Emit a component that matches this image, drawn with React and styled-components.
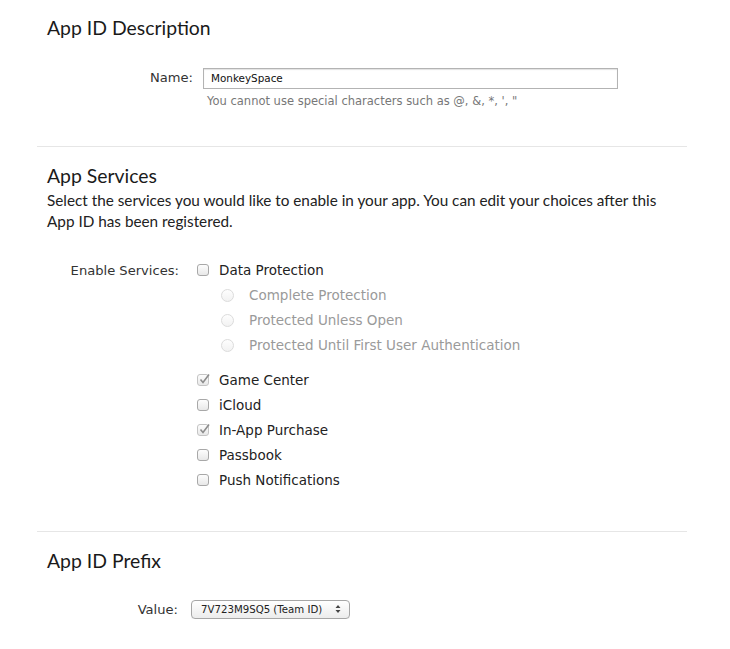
import React from "react";
import styled, { createGlobalStyle } from "styled-components";

const Global = createGlobalStyle`
  html, body { margin: 0; padding: 0; background: #fff; }
  body { font-family: "DejaVu Sans", "Lato", sans-serif; color: #222; }
`;

const Page = styled.div`
  width: 650px;
  margin-left: 37px;
  padding-top: 16px;
`;

const Section = styled.section`
  padding: 0 10px ${(p) => p.$bottom || 0}px;
`;

const Divider = styled.hr`
  border: 0;
  border-top: 1px solid #e6e6e6;
  margin: 0;
`;

const Heading = styled.h2`
  margin: 0;
  font-family: "Lato", sans-serif;
  font-size: 19.4px;
  font-weight: 400;
  line-height: 24px;
  color: #1a1a1a;
  padding-top: ${(p) => p.$top || 0}px;
`;

const Description = styled.p`
  margin: 2px 0 0;
  font-family: "Lato", sans-serif;
  font-size: 15.3px;
  line-height: 21px;
  width: 630px;
  color: #222;
`;

const FormRow = styled.div`
  display: grid;
  grid-template-columns: ${(p) => p.$label}px auto;
  column-gap: ${(p) => p.$gap}px;
  align-items: start;
  margin-top: ${(p) => p.$top}px;
`;

const Label = styled.label`
  text-align: right;
  font-size: 13.1px;
  line-height: ${(p) => p.$lh || 20}px;
  color: #333;
  white-space: nowrap;
`;

const TextInput = styled.input`
  box-sizing: border-box;
  width: 415px;
  height: 21px;
  border: 1px solid #b3b3b3;
  box-shadow: inset 0 1px 1px rgba(0, 0, 0, 0.12);
  padding: 0 7px;
  font-family: "DejaVu Sans", sans-serif;
  font-size: 10.4px;
  color: #111;
  outline: none;
`;

const Hint = styled.div`
  padding-left: 4px;
  margin-top: 4px;
  font-size: 11.5px;
  line-height: 16px;
  color: #777;
`;

const OptionList = styled.div`
  display: flex;
  flex-direction: column;
`;

const Option = styled.div`
  display: flex;
  align-items: center;
  height: 25px;
  padding-left: ${(p) => (p.$indent ? 24 : 0)}px;
  margin-top: ${(p) => p.$top || 0}px;
  font-size: 13.5px;
  color: ${(p) => (p.$muted ? "#9a9a9a" : "#222")};
  white-space: nowrap;
`;

const Box = styled.span`
  box-sizing: border-box;
  width: 12px;
  height: 12px;
  margin-right: 10px;
  border: 1px solid #a8a8a8;
  border-radius: 3px;
  background: linear-gradient(#fdfdfd, #e8e8e8);
  position: relative;
  flex: none;
  ${(p) => p.$checked && `border-color: #c4c4c4;`}
`;

const Tick = styled.svg`
  position: absolute;
  left: 0px;
  top: -3px;
`;

const Radio = styled.span`
  box-sizing: border-box;
  width: 13px;
  height: 13px;
  margin-right: 15px;
  border: 1px solid #dcdcdc;
  border-radius: 50%;
  background: linear-gradient(#fefefe, #f2f2f2);
  flex: none;
`;

const Select = styled.div`
  box-sizing: border-box;
  width: 159px;
  height: 19px;
  border: 1px solid #a6a6a6;
  border-radius: 4px;
  background: linear-gradient(#ffffff, #ececec);
  box-shadow: 0 1px 0 rgba(0, 0, 0, 0.05);
  display: flex;
  align-items: center;
  justify-content: space-between;
  padding: 0 8px 0 9px;
  font-size: 10.2px;
  color: #222;
`;

const Arrows = styled.svg`
  flex: none;
`;

function Checkbox({ checked }) {
  return (
    <Box $checked={checked}>
      {checked && (
        <Tick width="13" height="13" viewBox="0 0 13 13">
          <path d="M2.5 7.5 L5 10.5 L11 2.5" fill="none" stroke="#8c8c8c" strokeWidth="1.6" />
        </Tick>
      )}
    </Box>
  );
}

const services = [
  { name: "Game Center", checked: true },
  { name: "iCloud", checked: false },
  { name: "In-App Purchase", checked: true },
  { name: "Passbook", checked: false },
  { name: "Push Notifications", checked: false },
];

const protections = [
  "Complete Protection",
  "Protected Unless Open",
  "Protected Until First User Authentication",
];

export default function App() {
  return (
    <>
      <Global />
      <Page>
        <Section $bottom={37}>
          <Heading>App ID Description</Heading>
          <FormRow $label={146} $gap={10} $top={27}>
            <Label $lh={21}>Name:</Label>
            <div>
              <TextInput defaultValue="MonkeySpace" />
              <Hint>You cannot use special characters such as @, &amp;, *, ', "</Hint>
            </div>
          </FormRow>
        </Section>
        <Divider />
        <Section $bottom={38}>
          <Heading $top={17}>App Services</Heading>
          <Description>
            Select the services you would like to enable in your app. You can edit your choices after this App ID has been registered.
          </Description>
          <FormRow $label={132} $gap={18} $top={26}>
            <Label $lh={25}>Enable Services:</Label>
            <OptionList>
              <Option>
                <Checkbox />
                Data Protection
              </Option>
              {protections.map((p) => (
                <Option key={p} $indent $muted>
                  <Radio />
                  {p}
                </Option>
              ))}
              {services.map((s, i) => (
                <Option key={s.name} $top={i === 0 ? 10 : 0}>
                  <Checkbox checked={s.checked} />
                  {s.name}
                </Option>
              ))}
            </OptionList>
          </FormRow>
        </Section>
        <Divider />
        <Section>
          <Heading $top={17}>App ID Prefix</Heading>
          <FormRow $label={131} $gap={13} $top={27}>
            <Label $lh={19}>Value:</Label>
            <Select>
              <span>7V723M9SQ5 (Team ID)</span>
              <Arrows width="6" height="10" viewBox="0 0 6 10">
                <path d="M0.5 4 L3 1 L5.5 4 Z M0.5 6 L3 9 L5.5 6 Z" fill="#444" />
              </Arrows>
            </Select>
          </FormRow>
        </Section>
      </Page>
    </>
  );
}
